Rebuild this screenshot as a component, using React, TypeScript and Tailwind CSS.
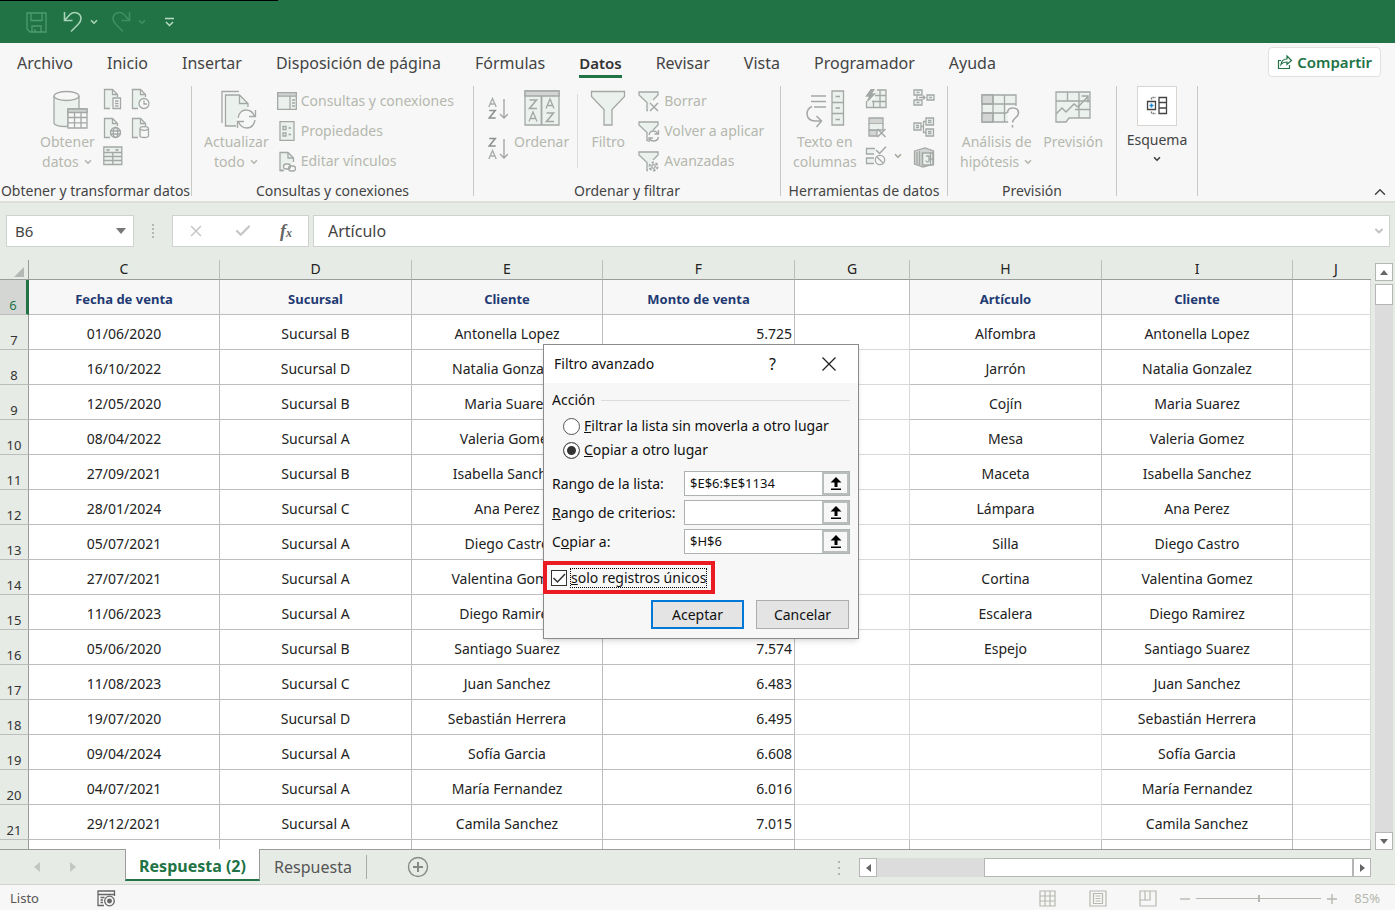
import type { ReactNode } from "react"
import { ChevronDown, ChevronUp, X, Check } from "lucide-react"

type Row = {
  n: number
  fecha: string
  sucursal: string
  cliente: string
  monto: string
  articulo: string
}

const rows: Row[] = [
  { n: 7, fecha: "01/06/2020", sucursal: "Sucursal B", cliente: "Antonella Lopez", monto: "5.725", articulo: "Alfombra" },
  { n: 8, fecha: "16/10/2022", sucursal: "Sucursal D", cliente: "Natalia Gonzalez", monto: "", articulo: "Jarrón" },
  { n: 9, fecha: "12/05/2020", sucursal: "Sucursal B", cliente: "Maria Suarez", monto: "", articulo: "Cojín" },
  { n: 10, fecha: "08/04/2022", sucursal: "Sucursal A", cliente: "Valeria Gomez", monto: "", articulo: "Mesa" },
  { n: 11, fecha: "27/09/2021", sucursal: "Sucursal B", cliente: "Isabella Sanchez", monto: "", articulo: "Maceta" },
  { n: 12, fecha: "28/01/2024", sucursal: "Sucursal C", cliente: "Ana Perez", monto: "", articulo: "Lámpara" },
  { n: 13, fecha: "05/07/2021", sucursal: "Sucursal A", cliente: "Diego Castro", monto: "", articulo: "Silla" },
  { n: 14, fecha: "27/07/2021", sucursal: "Sucursal A", cliente: "Valentina Gomez", monto: "", articulo: "Cortina" },
  { n: 15, fecha: "11/06/2023", sucursal: "Sucursal A", cliente: "Diego Ramirez", monto: "", articulo: "Escalera" },
  { n: 16, fecha: "05/06/2020", sucursal: "Sucursal B", cliente: "Santiago Suarez", monto: "7.574", articulo: "Espejo" },
  { n: 17, fecha: "11/08/2023", sucursal: "Sucursal C", cliente: "Juan Sanchez", monto: "6.483", articulo: "" },
  { n: 18, fecha: "19/07/2020", sucursal: "Sucursal D", cliente: "Sebastián Herrera", monto: "6.495", articulo: "" },
  { n: 19, fecha: "09/04/2024", sucursal: "Sucursal A", cliente: "Sofía Garcia", monto: "6.608", articulo: "" },
  { n: 20, fecha: "04/07/2021", sucursal: "Sucursal A", cliente: "María Fernandez", monto: "6.016", articulo: "" },
  { n: 21, fecha: "29/12/2021", sucursal: "Sucursal A", cliente: "Camila Sanchez", monto: "7.015", articulo: "" },
]

const menuTabs = [
  "Archivo",
  "Inicio",
  "Insertar",
  "Disposición de página",
  "Fórmulas",
  "Datos",
  "Revisar",
  "Vista",
  "Programador",
  "Ayuda",
]

const columns = ["C", "D", "E", "F", "G", "H", "I", "J"]

function Icon({ w, h, children }: { w: number; h: number; children: ReactNode }) {
  return (
    <svg width={w} height={h} viewBox={`0 0 ${w} ${h}`} fill="none" stroke="#a3a8a5" strokeWidth={1.3} className="shrink-0">
      {children}
    </svg>
  )
}

const pale = "#ebf2ee"

function DatabaseTableIcon() {
  return (
    <Icon w={44} h={40}>
      <g transform="translate(8 0)">
        <path d="M1 6v27c0 2 5 3.500 12 3.500h2V20h11V6" fill={pale} />
        <ellipse cx="13.500" cy="6" rx="12.500" ry="4.500" fill="#f7f7f7" />
        <path d="M15 19h19v19H15z" fill="#f7f7f7" />
        <path d="M15 19h19v3.500H15z" fill="#cfd3d1" />
        <path d="M15 27.500h19M15 32.800h19M21.500 22.500V38M28 22.500V38" />
      </g>
    </Icon>
  )
}

function PageIcon({ kind }: { kind: "text" | "clock" | "globe" | "db" }) {
  return (
    <Icon w={20} h={22}>
      <path d="M7 20.500H1.500v-19h8l5 5V9M9.500 1.500v5h5" fill={pale} />
      {kind === "text" && (
        <>
          <path d="M10 10h7.500v10.500H10z" fill="#f7f7f7" />
          <path d="M12 13h3.500M12 15.500h3.500M12 18h3.500" />
        </>
      )}
      {kind === "clock" && (
        <>
          <circle cx="13" cy="15.500" r="5" fill="#f7f7f7" />
          <path d="M13 12.500v3.500h3" />
        </>
      )}
      {kind === "globe" && (
        <>
          <circle cx="12.500" cy="15.500" r="5" fill="#f7f7f7" />
          <ellipse cx="12.500" cy="15.500" rx="2.200" ry="5" />
          <path d="M7.500 14h10M7.500 17h10" />
        </>
      )}
      {kind === "db" && (
        <>
          <path d="M9 11.500v7.500c0 2 8.500 2 8.500 0v-7.500" fill="#f7f7f7" />
          <ellipse cx="13.200" cy="11.500" rx="4.200" ry="1.800" fill="#f7f7f7" />
        </>
      )}
    </Icon>
  )
}

function TableIcon() {
  return (
    <Icon w={20} h={20}>
      <path d="M.8 1h18v17.500H.8z" fill={pale} />
      <path d="M.8 6.500h18M.8 10.500h18M.8 14.500h18M9.800 6.500v12" />
      <path d="M3.500 3.200 5 4.500l1.500-1.300M12.500 3.200 14 4.500l1.500-1.300" strokeWidth={1.500} />
    </Icon>
  )
}

function RefreshPageIcon() {
  return (
    <Icon w={44} h={40}>
      <g transform="translate(7 0)">
        <path d="M1 33V1.500h17" />
        <path d="M4.500 5h14l8.500 8.500V36H4.500z" fill={pale} stroke="none" />
        <path d="M15 36H4.500V5h14l8.500 8.500V17M18.500 5v8.500H27" />
        <circle cx="25.500" cy="29" r="10" fill="#f7f7f7" stroke="none" />
        <path d="M17 28c1-5 4-8 8-8 4 0 7 2.500 8.500 6M34.500 20v6.500H28M34 30c-1 5-4 8-8 8-4 0-7-2.500-8.500-6M16.500 38v-6.500H23" />
      </g>
    </Icon>
  )
}

function PaneIcon() {
  return (
    <Icon w={20} h={18}>
      <path d="M.7.700h18.600v16.600H.7z" fill={pale} />
      <path d="M.7.700h18.600v3.500H.7z" fill="#cfd3d1" />
      <path d="M13 4v13M15 8h3M15 11h3M15 14h3" />
    </Icon>
  )
}

function PropertiesIcon() {
  return (
    <Icon w={20} h={20}>
      <path d="M3 .7h14v18.600H3z" fill={pale} />
      <path d="M6 5.500h3v3H6zM6 12h3v3H6zM11.500 7H14M11.500 13.500H14" />
    </Icon>
  )
}

function EditLinksIcon() {
  return (
    <Icon w={20} h={21}>
      <path d="M7 19.500H3V1.500h8l5.500 5.500v4" fill={pale} />
      <path d="M11 1.500V7h5.500M3 19.500h3" />
      <rect x="6.500" y="13" width="7" height="5" rx="2.500" fill="#f7f7f7" />
      <rect x="11.500" y="15" width="7" height="5" rx="2.500" />
    </Icon>
  )
}

function SortIcon({ desc }: { desc?: boolean }) {
  return (
    <svg width={20} height={26} viewBox="0 0 20 26" fill="none" stroke="#a3a8a5" strokeWidth={1.4}>
      <g transform={desc ? "translate(0 12)" : undefined} stroke="#a9adab">
        <path d="M.8 10 4.500 1.500 8.200 10M2 7h5" />
      </g>
      <g transform={desc ? "translate(0 -12)" : undefined} stroke="#8d928f" strokeWidth={1.6}>
        <path d="M1.200 13.500h6L1.200 21h6.500" />
      </g>
      <path d="M16 2v19M12 17l4 4 4-4" />
    </svg>
  )
}

function SortDialogIcon() {
  return (
    <Icon w={36} h={36}>
      <path d="M1 1h34v34H1z" fill={pale} />
      <path d="M1 1h34v5H1z" fill="#d2d5d3" />
      <path d="M17.500 6v29" strokeWidth={1.800} />
      <path d="M5.500 10h7l-7 8.500h7.500M22.500 23h7l-7 8.500H30" strokeWidth={1.600} />
      <path d="m5 31.500 4-9.500 4 9.500M6.500 28.500h5M22 18.500 26 9l4 9.500M23.500 15.500h5" />
    </Icon>
  )
}

function FunnelIcon() {
  return (
    <Icon w={36} h={36}>
      <path d="M1.500 1.500h33v5L22 19.500V35h-8V19.500L1.500 6.500z" fill={pale} />
    </Icon>
  )
}

function SmallFunnelIcon({ kind }: { kind: "clear" | "reapply" | "advanced" }) {
  return (
    <Icon w={22} h={21}>
      <path d="M1 1h19v3.500L12 11v8l-3.500-2v-6L1 4.500z" fill={pale} stroke="none" />
      <path d="M10 19.500H9V11.500L1 4V1h19v3l-5 5" />
      {kind === "clear" && <path d="m12 12 8 8m0-8-8 8" strokeWidth={1.500} />}
      {kind === "reapply" && (
        <>
          <circle cx="15.500" cy="14.500" r="5.500" fill="#f7f7f7" stroke="none" />
          <path d="M11 14c.5-2.500 2-4 4.500-4 2 0 3.500 1 4.500 2.500M20.500 9v4h-4M20.500 16c-.5 2.500-2.500 4-5 4-2 0-3.500-1-4-2.500M11 21v-4h4" />
        </>
      )}
      {kind === "advanced" && (
        <>
          <circle cx="15.500" cy="15.500" r="4" fill="#f7f7f7" strokeWidth={2} strokeDasharray="2.500 1.600" />
          <circle cx="15.500" cy="15.500" r="1.800" />
        </>
      )}
    </Icon>
  )
}

function TextColumnsIcon() {
  return (
    <Icon w={40} h={40}>
      <path d="M6 6h15M6 11.500h15M9 17h12" />
      <path d="M7 16.500c-7 3-7 14 3 14.500h6M11.500 26l5 5-5 6" strokeWidth={1.500} />
      <path d="M27 1h11.500v34H27z" fill={pale} />
      <path d="M27 12.500h11.500M27 23.500h11.500M30.500 6.500h4.500M30.500 18h4.500M30.500 29.500h4.500" />
    </Icon>
  )
}

function FlashFillIcon() {
  return (
    <Icon w={22} h={20}>
      <path d="M9 1.500h12v17H1.500V10h9z" fill={pale} stroke="none" />
      <path d="M12 1h9v17.500H1.500V12M15 1v17.500M8.500 12v6.500M10 6.500h11M7 12.500h14" />
      <path d="M6 .5 1.500 7H5l-2.500 5L9.500 5H6L9 .5z" fill="#a3a8a5" />
    </Icon>
  )
}

function DuplicatesIcon() {
  return (
    <Icon w={22} h={21}>
      <path d="M4 1h14v6H4zM4 13h8v6H4z" fill="#d2d5d3" />
      <path d="M4 7v6h14V7" fill={pale} />
      <path d="m12.500 12 8 8m0-8-8 8" strokeWidth={1.500} />
    </Icon>
  )
}

function ValidationIcon() {
  return (
    <Icon w={22} h={20}>
      <path d="M10 2.500H1.500V8H9M9 12H1.500v5.500H9" fill={pale} />
      <path d="m11 4 3.500 3.500L21 .8" strokeWidth={1.500} />
      <circle cx="15" cy="14" r="4.700" />
      <path d="m11.800 10.800 6.500 6.500" />
    </Icon>
  )
}

function ConsolidateIcon() {
  return (
    <Icon w={22} h={18}>
      <path d="M1 1h8v5H1zM1 11h8v5H1zM14 6h7v5h-7z" fill={pale} />
      <path d="M3.500 3.500h3M3.500 13.500h3M16 8.500h3M4 6v5M6 8.500h6M10 6.500l2 2-2 2" />
    </Icon>
  )
}

function RelationsIcon() {
  return (
    <Icon w={22} h={20}>
      <path d="M1 6h7v7H1zM13 1h7.500v7H13zM13 12h7.500v7H13z" fill={pale} />
      <path d="M8 9.500h2.500M13 4.500h-2.500v11H13M3 8.500h3M3 10.500h3M15 3.500h3.500M15 5.500h3.500M15 14.500h3.500M15 16.500h3.500" />
    </Icon>
  )
}

function DataModelIcon() {
  return (
    <Icon w={22} h={21}>
      <path d="M1.500 4 12 1l8.500 3v13L10 20l-8.500-3z" fill="#d2d5d3" />
      <path d="M4 5v12M6.500 4v14" />
      <path d="M9.500 6h10.500v12H9.500z" fill={pale} strokeWidth={1.600} />
      <path d="M13 9h3v4.500c0 2-3 2-3 0M16 12h4M17.500 6v12" />
    </Icon>
  )
}

function WhatIfIcon() {
  return (
    <Icon w={48} h={40}>
      <g transform="translate(8 4)">
        <path d="M1 1h34v27H1z" fill={pale} />
        <path d="M1 1h11v9H1zM1 19h11v9H1z" fill="#d2d5d3" />
        <path d="M1 10h34M1 19h34M12 1v27M23.500 1v27" />
        <path d="M25 12h15v22H28z" fill="#f7f7f7" stroke="none" />
        <path d="M26.500 19c0-3 2-5 5.500-5s5.500 2 5.500 5c0 4.500-6 5-6 9.500M31.500 31v2.500" strokeWidth={1.600} />
      </g>
    </Icon>
  )
}

function ForecastIcon() {
  return (
    <Icon w={36} h={34}>
      <g transform="translate(0 1)">
        <path d="M1 1h34v26H14l-3 4H1z" fill={pale} />
        <path d="M1 10h34M20 18.500h15M12.500 1v9M24 1v26" />
        <path d="m1 23 6-6 4 4 8-8 4 3L33 5.500M26.500 5H33v6.500" strokeWidth={1.500} />
      </g>
    </Icon>
  )
}

function OutlineIcon() {
  return (
    <svg width={22} height={20} viewBox="0 0 22 20" fill="none" stroke="#444" strokeWidth={1.3}>
      <path d="M1.500 5.500h8v8h-8z" />
      <path d="M5.500 7.500v4M3.500 9.500h4" stroke="#1e8ad6" strokeWidth={1.600} />
      <path d="M5.500 3.500v-2H10M5.500 15.500v2H10" stroke="#777" strokeDasharray="2 1" />
      <path d="M13 1.500h7.500v16H13zM13 6.500h7.500M13 12h7.500" />
    </svg>
  )
}

function BigButton({ icon, lines, chevron, className }: { icon: ReactNode; lines: string[]; chevron?: boolean; className?: string }) {
  return (
    <button className={`flex shrink-0 flex-col items-center pt-1 text-sm leading-5 text-[#b5b8ae] ${className ?? ""}`}>
      <span className="flex h-[42px] items-start">{icon}</span>
      {lines.map((line, i) => (
        <span key={line} className="flex items-center gap-1 whitespace-nowrap">
          {line}
          {chevron && i === lines.length - 1 && <ChevronDown size={10} strokeWidth={4} />}
        </span>
      ))}
    </button>
  )
}

function SmallButton({ icon, label }: { icon: ReactNode; label: string }) {
  return (
    <button className="flex h-[30px] items-center gap-1 whitespace-nowrap text-sm text-[#b5b8ae]">
      {icon}
      {label}
    </button>
  )
}

function Group({ label, className, children }: { label: string; className: string; children: ReactNode }) {
  return (
    <>
      <section className={`flex shrink-0 flex-col ${className}`}>
        <div className="flex flex-1 items-start">{children}</div>
        <h2 className="h-5 whitespace-nowrap text-center text-sm leading-5 text-[#444]">{label}</h2>
      </section>
      <div className="h-[110px] w-px shrink-0 bg-[#c8c9c3]" />
    </>
  )
}

function TitleBar() {
  return (
    <header className="h-[43px] shrink-0 bg-[#217346]">
      <div className="h-px w-[278px] bg-black" />
      <div className="flex h-[42px] items-center pl-[26px]">
        <button aria-label="Guardar">
          <svg width="21" height="21" viewBox="0 0 21 21" fill="none" stroke="#4f9a70" strokeWidth="1.300">
            <path d="M1 1h19v19H4l-3-3zM5 1v7.500h11V1M6 20v-6h9v6M9 17v3" />
          </svg>
        </button>
        <button aria-label="Deshacer" className="ml-4 flex items-center gap-[6px] text-[#a9d3b9]">
          <svg width="20" height="22" viewBox="0 0 20 22" fill="none" stroke="currentColor" strokeWidth="1.600">
            <path d="M1.500 1v8.500h8M2 9l5-5.500c4-4 11-1.500 11 4 0 3-1.500 4.500-3 6L8 20.500" />
          </svg>
          <ChevronDown size={10} strokeWidth={4} />
        </button>
        <button aria-label="Rehacer" className="ml-3 flex items-center gap-[6px] text-[#3f8e61]">
          <svg width="20" height="22" viewBox="0 0 20 22" fill="none" stroke="currentColor" strokeWidth="1.600">
            <path d="M18.500 1v8.500h-8M18 9l-5-5.500c-4-4-11-1.500-11 4 0 3 1.500 4.500 3 6l7 7" />
          </svg>
          <ChevronDown size={10} strokeWidth={4} />
        </button>
        <button aria-label="Personalizar barra" className="ml-[17px] text-[#b9dcc6]">
          <svg width="11" height="10" viewBox="0 0 11 10" fill="none" stroke="currentColor" strokeWidth="1.500">
            <path d="M1 1.500h9M2 5l3.500 3.500L9 5" />
          </svg>
        </button>
      </div>
    </header>
  )
}

function MenuBar() {
  return (
    <nav className="flex h-[43px] shrink-0 items-start justify-between bg-[#f7f7f7] pl-[17px] pr-[14px] pt-1">
      <div className="flex gap-[34px]">
        {menuTabs.map((tab) => (
          <a
            key={tab}
            href="#"
            className={`whitespace-nowrap border-b-3 pt-1 leading-6 ${
              tab === "Datos" ? "border-[#217346] text-[15px] font-semibold text-[#333]" : "border-transparent text-base text-[#444]"
            }`}
          >
            {tab}
          </a>
        ))}
      </div>
      <button className="flex h-[30px] items-center gap-1 rounded-sm border border-[#e3e0de] bg-white px-2 text-[15px] font-semibold text-[#217346]">
        <svg width="16" height="15" viewBox="0 0 16 15" fill="none" stroke="currentColor" strokeWidth="1.200">
          <path d="M4 5.500H1.500v8h11V10M4 9.500c.5-4 3-5.500 6-5.500V1l4.500 4.500L10 9.500V7C7.500 7 5.500 7.500 4 9.500z" />
        </svg>
        Compartir
      </button>
    </nav>
  )
}

function Ribbon() {
  return (
    <div className="flex h-[117px] shrink-0 items-start border-b-2 border-[#dcdfda] bg-[#f7f7f7]">
      <Group label="Obtener y transformar datos" className="h-[115px] w-[191px]">
        <BigButton icon={<DatabaseTableIcon />} lines={["Obtener", "datos"]} chevron className="ml-10" />
        <div className="ml-2 grid grid-cols-2 gap-x-2 gap-y-[7px] pt-[2px]">
          <button aria-label="De texto/CSV"><PageIcon kind="text" /></button>
          <button aria-label="Fuentes recientes"><PageIcon kind="clock" /></button>
          <button aria-label="De la web"><PageIcon kind="globe" /></button>
          <button aria-label="Conexiones existentes"><PageIcon kind="db" /></button>
          <button aria-label="De tabla o rango"><TableIcon /></button>
        </div>
      </Group>

      <Group label="Consultas y conexiones" className="h-[115px] w-[281px]">
        <BigButton icon={<RefreshPageIcon />} lines={["Actualizar", "todo"]} chevron className="ml-3" />
        <div className="ml-2 flex flex-col">
          <SmallButton icon={<PaneIcon />} label="Consultas y conexiones" />
          <SmallButton icon={<PropertiesIcon />} label="Propiedades" />
          <SmallButton icon={<EditLinksIcon />} label="Editar vínculos" />
        </div>
      </Group>

      <Group label="Ordenar y filtrar" className="h-[115px] w-[306px]">
        <div className="ml-[14px] flex flex-col gap-[14px] pt-[11px]">
          <button aria-label="Ordenar de A a Z"><SortIcon /></button>
          <button aria-label="Ordenar de Z a A"><SortIcon desc /></button>
        </div>
        <BigButton icon={<SortDialogIcon />} lines={["Ordenar"]} className="ml-[6px]" />
        <div className="ml-2 mt-2 h-[74px] w-px bg-[#dcddd7]" />
        <BigButton icon={<FunnelIcon />} lines={["Filtro"]} className="ml-3" />
        <div className="ml-3 flex flex-col">
          <SmallButton icon={<SmallFunnelIcon kind="clear" />} label="Borrar" />
          <SmallButton icon={<SmallFunnelIcon kind="reapply" />} label="Volver a aplicar" />
          <SmallButton icon={<SmallFunnelIcon kind="advanced" />} label="Avanzadas" />
        </div>
      </Group>

      <Group label="Herramientas de datos" className="h-[115px] w-[166px]">
        <BigButton icon={<TextColumnsIcon />} lines={["Texto en", "columnas"]} className="ml-3" />
        <div className="ml-2 flex flex-col gap-2 pt-[3px]">
          <button aria-label="Relleno rápido"><FlashFillIcon /></button>
          <button aria-label="Quitar duplicados"><DuplicatesIcon /></button>
          <button aria-label="Validación de datos" className="flex items-center gap-[6px] text-[#a5a8a0]">
            <ValidationIcon />
            <ChevronDown size={10} strokeWidth={4} />
          </button>
        </div>
        <div className="ml-[10px] flex flex-col gap-[10px] pt-[3px]">
          <button aria-label="Consolidar"><ConsolidateIcon /></button>
          <button aria-label="Relaciones"><RelationsIcon /></button>
          <button aria-label="Modelo de datos"><DataModelIcon /></button>
        </div>
      </Group>

      <Group label="Previsión" className="h-[115px] w-[168px]">
        <BigButton icon={<WhatIfIcon />} lines={["Análisis de", "hipótesis"]} chevron className="ml-3" />
        <BigButton icon={<ForecastIcon />} lines={["Previsión"]} className="ml-[10px]" />
      </Group>

      <section className="flex h-[115px] w-[80px] shrink-0 flex-col items-center">
        <button className="flex flex-col items-center text-sm leading-5 text-[#444]">
          <span className="mb-1 flex h-10 w-10 items-center justify-center border border-[#d9d4d0] bg-white">
            <OutlineIcon />
          </span>
          Esquema
          <ChevronDown size={10} strokeWidth={4} className="mt-1" />
        </button>
      </section>
      <div className="h-[110px] w-px shrink-0 bg-[#c8c9c3]" />
      <button aria-label="Contraer la cinta" className="ml-auto mr-[6px] self-end text-[#444]">
        <ChevronUp size={18} />
      </button>
    </div>
  )
}

function FormulaBar() {
  return (
    <div className="flex shrink-0 items-center bg-[#e6ebe6] pb-[13px] pl-[6px] pr-[5px] pt-3 text-[15px] text-[#444]">
      <div className="flex h-8 w-32 items-center border border-[#cfd3cf] bg-white">
        <input aria-label="Cuadro de nombres" defaultValue="B6" className="w-full min-w-0 bg-transparent pl-2 outline-none" />
        <button aria-label="Abrir nombres" className="px-[7px]">
          <svg width="10" height="6" viewBox="0 0 10 6" fill="#777"><path d="M0 0h10L5 6z" /></svg>
        </button>
      </div>
      <svg width="4" height="14" viewBox="0 0 4 14" fill="#b5b5b5" className="mx-[17px]">
        <path d="M1 0h2v2H1zM1 4h2v2H1zM1 8h2v2H1zM1 12h2v2H1z" />
      </svg>
      <div className="flex h-8 w-[137px] items-center justify-between border border-[#cfd3cf] bg-white px-[14px]">
        <button aria-label="Cancelar entrada" className="text-[#c6c6c6]"><X size={18} /></button>
        <button aria-label="Introducir" className="text-[#c6c6c6]"><Check size={18} strokeWidth={3} /></button>
        <button aria-label="Insertar función" className="pr-[2px] font-['Liberation_Serif',serif] text-lg font-bold italic leading-5 text-[#666]">
          f<span className="text-xs">x</span>
        </button>
      </div>
      <div className="ml-1 flex h-8 flex-1 items-center border border-[#cfd3cf] bg-white">
        <input aria-label="Barra de fórmulas" defaultValue="Artículo" className="w-full min-w-0 bg-transparent pl-[14px] text-base outline-none" />
        <button aria-label="Expandir barra de fórmulas" className="px-1 text-[#c3c3c3]"><ChevronDown size={12} strokeWidth={4} /></button>
      </div>
    </div>
  )
}

function Cell({ children, soft, right }: { children?: ReactNode; soft?: boolean; right?: boolean }) {
  return (
    <td
      className={`h-[35px] overflow-hidden whitespace-nowrap border-b border-r pb-0 pt-[3px] leading-5 ${soft ? "border-[#d8dad8]" : "border-[#bdbdbd]"} ${
        right ? "pl-0 pr-[2px] text-right" : "px-0 text-center"
      }`}
    >
      {children}
    </td>
  )
}

function HeadCell({ children }: { children?: ReactNode }) {
  return (
    <td className={`h-[35px] border-b border-r border-[#bdbdbd] px-0 pb-0 pt-[3px] text-center text-[13px] font-bold leading-5 text-[#1f3a73] ${children ? "bg-[#f7f7f7]" : ""}`}>
      {children}
    </td>
  )
}

function RowHead({ n, active }: { n: number; active?: boolean }) {
  return (
    <th
      scope="row"
      className={`border-b p-0 align-bottom text-[13px] font-normal leading-[18px] ${
        active ? "border-b-[#bdbdbd] border-r-3 border-r-[#217346] bg-[#d4d6d4] text-[#217346]" : "border-r border-b-[#bdbdbd] border-r-[#9b9b9b] bg-[#e6ebe6] text-[#333]"
      }`}
    >
      {n}
    </th>
  )
}

function Sheet() {
  return (
    <main className="flex min-h-0 flex-1 overflow-hidden bg-[#e6ebe6]">
      <div className="min-w-0 flex-1 overflow-hidden border-b border-[#9b9b9b]">
        <table className="w-full table-fixed border-separate border-spacing-0 bg-white text-sm text-[#222]">
          <colgroup>
            <col className="w-[29px]" />
            <col className="w-[191px]" />
            <col className="w-[192px]" />
            <col className="w-[191px]" />
            <col className="w-[192px]" />
            <col className="w-[115px]" />
            <col className="w-[192px]" />
            <col className="w-[191px]" />
            <col />
          </colgroup>
          <thead>
            <tr className="bg-[#e6ebe6]">
              <td className="h-5 border-b border-r border-[#9b9b9b] p-0">
                <svg width="10" height="10" viewBox="0 0 10 10" fill="#b5b9b5" className="ml-auto mr-1 mt-1"><path d="M10 0v10H0z" /></svg>
              </td>
              {columns.map((c) => (
                <th
                  key={c}
                  scope="col"
                  className={`h-5 border-b border-b-[#9b9b9b] pb-[2px] pr-0 pt-0 text-sm font-normal leading-4 ${
                    c === "J" ? "pl-2" : "border-r border-r-[#bdbdbd] pl-0"
                  }`}
                >
                  {c}
                </th>
              ))}
            </tr>
          </thead>
          <tbody>
            <tr>
              <RowHead n={6} active />
              <HeadCell>Fecha de venta</HeadCell>
              <HeadCell>Sucursal</HeadCell>
              <HeadCell>Cliente</HeadCell>
              <HeadCell>Monto de venta</HeadCell>
              <HeadCell />
              <HeadCell>Artículo</HeadCell>
              <HeadCell>Cliente</HeadCell>
              <Cell soft />
            </tr>
            {rows.map((r) => (
              <tr key={r.n}>
                <RowHead n={r.n} />
                <Cell>{r.fecha}</Cell>
                <Cell>{r.sucursal}</Cell>
                <Cell>{r.cliente}</Cell>
                <Cell right>{r.monto}</Cell>
                <Cell soft />
                <Cell soft={!r.articulo}>{r.articulo}</Cell>
                <Cell>{r.cliente}</Cell>
                <Cell soft />
              </tr>
            ))}
            <tr>
              <th className="h-[35px] border-r border-[#9b9b9b] bg-[#e6ebe6]" />
              {columns.map((c) => (
                <Cell key={c} />
              ))}
            </tr>
          </tbody>
        </table>
      </div>
      <div className="ml-1 mr-[2px] mt-[3px] flex w-[18px] flex-col">
        <button aria-label="Subir" className="flex h-[18px] shrink-0 items-center justify-center border border-[#b5b5b5] bg-white">
          <svg width="8" height="5" viewBox="0 0 8 5" fill="#666"><path d="M0 5h8L4 0z" /></svg>
        </button>
        <div className="mt-[3px] h-[21px] shrink-0 border border-[#b5b5b5] bg-white" />
        <div className="flex-1 bg-[#dcdcdc]" />
        <button aria-label="Bajar" className="flex h-[18px] shrink-0 items-center justify-center border border-[#b5b5b5] bg-white">
          <svg width="8" height="5" viewBox="0 0 8 5" fill="#666"><path d="M0 0h8L4 5z" /></svg>
        </button>
      </div>
    </main>
  )
}

function SheetTabs() {
  return (
    <div className="flex h-[34px] shrink-0 items-start bg-[#e6ebe6] text-base text-[#555]">
      <div className="flex h-[34px] w-[125px] items-center gap-[30px] pl-[34px]">
        <button aria-label="Hoja anterior"><svg width="6" height="10" viewBox="0 0 6 10" fill="#c3c6c3"><path d="M6 0v10L0 5z" /></svg></button>
        <button aria-label="Hoja siguiente"><svg width="6" height="10" viewBox="0 0 6 10" fill="#c3c6c3"><path d="M0 0v10l6-5z" /></svg></button>
      </div>
      <button className="-mt-px h-8 w-[135px] whitespace-nowrap border-x border-b-2 border-x-[#9b9b9b] border-b-[#217346] bg-white pt-1 font-bold text-[#217346]">Respuesta (2)</button>
      <button className="mt-[5px] h-6 w-[107px] border-r border-[#aaa]">Respuesta</button>
      <button aria-label="Hoja nueva" className="ml-10 mt-[6px]">
        <svg width="22" height="22" viewBox="0 0 22 22" fill="none" stroke="#858a86" strokeWidth="1.400">
          <circle cx="11" cy="11" r="9.500" />
          <path d="M6 11h10M11 6v10" strokeWidth="2" />
        </svg>
      </button>
      <div className="ml-auto mr-6 mt-2 flex h-[19px] w-[534px] items-center">
        <svg width="4" height="14" viewBox="0 0 4 14" fill="#b5b5b5" className="mr-[18px]">
          <path d="M1 0h2v2H1zM1 6h2v2H1zM1 12h2v2H1z" />
        </svg>
        <button aria-label="Desplazar a la izquierda" className="flex h-full w-[18px] items-center justify-center border border-[#b5b5b5] bg-white">
          <svg width="5" height="8" viewBox="0 0 5 8" fill="#666"><path d="M5 0v8L0 4z" /></svg>
        </button>
        <div className="h-full w-[107px] bg-[#dcdcdc]" />
        <div className="h-full flex-1 border border-[#b5b5b5] bg-white" />
        <button aria-label="Desplazar a la derecha" className="flex h-full w-[18px] items-center justify-center border border-[#b5b5b5] bg-white">
          <svg width="5" height="8" viewBox="0 0 5 8" fill="#666"><path d="M0 0v8l5-4z" /></svg>
        </button>
      </div>
    </div>
  )
}

function StatusBar() {
  return (
    <footer className="flex h-[26px] shrink-0 items-center border-t border-[#d2d4ce] bg-[#f7f7f7] pl-[10px] pr-[15px] pt-[2px] text-[13px] text-[#555]">
      <span className="w-[87px]">Listo</span>
      <button aria-label="Grabar macro">
        <svg width="19" height="17" viewBox="0 0 19 17" fill="none" stroke="#666" strokeWidth="1.300">
          <path d="M7 15.500H1V1h16.500v5M1 4.500h16.500M3.500 7.500h4M3.500 10h2.500M3.500 12.500h2.500" />
          <circle cx="12.500" cy="11" r="4.800" />
          <circle cx="12.500" cy="11" r="1.800" fill="#666" />
        </svg>
      </button>
      <div className="ml-auto flex items-center text-[#b5b8ae]">
        <button aria-label="Normal" className="mr-[33px]">
          <svg width="17" height="17" viewBox="0 0 17 17" fill="none" stroke="currentColor" strokeWidth="1.200"><path d="M1 1h15v15H1zM1 6h15M1 11h15M6 1v15M11 1v15" /></svg>
        </button>
        <button aria-label="Diseño de página" className="mr-8">
          <svg width="18" height="17" viewBox="0 0 18 17" fill="none" stroke="currentColor" strokeWidth="1.200"><path d="M1 1h16v15H1zM4.500 3.500h9v10h-9zM6.500 6h5M6.500 8.500h5M6.500 11h5" /></svg>
        </button>
        <button aria-label="Vista previa de salto de página" className="mr-[23px]">
          <svg width="18" height="17" viewBox="0 0 18 17" fill="none" stroke="currentColor" strokeWidth="1.200"><path d="M1 1h16v15H1zM1 10h10V1M6 1v9" /></svg>
        </button>
        <button aria-label="Alejar" className="mr-[6px]">
          <svg width="10" height="10" viewBox="0 0 10 10" stroke="currentColor" strokeWidth="1.400"><path d="M0 5h10" /></svg>
        </button>
        <input
          type="range"
          aria-label="Zoom"
          defaultValue={50}
          className="h-px w-[125px] appearance-none bg-[#b5b8ae] [&::-webkit-slider-thumb]:h-[7px] [&::-webkit-slider-thumb]:w-[2px] [&::-webkit-slider-thumb]:appearance-none [&::-webkit-slider-thumb]:bg-[#b5b8ae]"
        />
        <button aria-label="Acercar" className="ml-[6px] mr-[17px]">
          <svg width="10" height="10" viewBox="0 0 10 10" stroke="currentColor" strokeWidth="1.400"><path d="M0 5h10M5 0v10" /></svg>
        </button>
        <span>85%</span>
      </div>
    </footer>
  )
}

function RangeField({ id, label, value }: { id: string; label: ReactNode; value: string }) {
  return (
    <div className="flex h-[25px] items-center">
      <label htmlFor={id} className="flex-1 whitespace-nowrap">{label}</label>
      <div className="flex h-full w-[166px] border border-[#adb2b5] bg-white">
        <input id={id} defaultValue={value} className="w-full min-w-0 bg-transparent pl-[5px] text-[13px] outline-none" />
        <button aria-label="Seleccionar rango" className="flex w-[27px] shrink-0 items-center justify-center border-2 border-[#b9bebc] bg-[#f7f7f7]">
          <svg width="12" height="14" viewBox="0 0 12 14" fill="#000"><path d="M6 0l5.500 5.500h-4V10h-3V5.500h-4zM1 11.500h10V13H1z" /></svg>
        </button>
      </div>
    </div>
  )
}

function RadioOption({ id, children, checked }: { id: string; children: ReactNode; checked?: boolean }) {
  return (
    <label htmlFor={id} className="flex h-6 items-center gap-1 whitespace-nowrap">
      <input
        id={id}
        type="radio"
        name="accion"
        defaultChecked={checked}
        className="h-[17px] w-[17px] shrink-0 appearance-none rounded-full border border-[#555] bg-white checked:bg-[#333] checked:shadow-[inset_0_0_0_3px_white]"
      />
      <span>{children}</span>
    </label>
  )
}

function AdvancedFilterDialog() {
  return (
    <div role="dialog" aria-label="Filtro avanzado" className="absolute left-[543px] top-[344px] w-[316px] border border-[#8b8b8b] bg-[#f7f7f7] text-sm text-[#111] shadow-md">
      <div className="flex h-[38px] items-center bg-white pl-[10px] pr-[22px]">
        <span className="flex-1">Filtro avanzado</span>
        <button aria-label="Ayuda" className="mr-[46px] text-base">?</button>
        <button aria-label="Cerrar">
          <svg width="14" height="14" viewBox="0 0 14 14" stroke="#222" strokeWidth="1.300"><path d="m.5.5 13 13M13.500.5l-13 13" /></svg>
        </button>
      </div>
      <div className="px-2 pt-[7px]">
        <div className="flex items-center gap-[6px] leading-5">
          Acción
          <div className="h-px flex-1 bg-[#dcdcdc]" />
        </div>
        <div className="mb-[9px] mt-1 pl-[11px]">
          <RadioOption id="filtrar"><u>F</u>iltrar la lista sin moverla a otro lugar</RadioOption>
          <RadioOption id="copiar" checked><u>C</u>opiar a otro lugar</RadioOption>
        </div>
        <div className="flex flex-col gap-1">
          <RangeField id="lista" label={<>Ran<u>g</u>o de la lista:</>} value="$E$6:$E$1134" />
          <RangeField id="criterios" label={<><u>R</u>ango de criterios:</>} value="" />
          <RangeField id="destino" label={<>C<u>o</u>piar a:</>} value="$H$6" />
        </div>
      </div>
      <div className="-ml-px mt-[7px] flex h-[33px] w-[172px] items-center border-4 border-[#ea1b23] pl-1">
        <input id="unicos" type="checkbox" defaultChecked className="peer h-4 w-4 shrink-0 appearance-none border border-[#333] bg-white" />
        <svg width="16" height="16" viewBox="0 0 16 16" fill="none" stroke="#333" strokeWidth="1.500" className="pointer-events-none invisible -ml-4 shrink-0 peer-checked:visible">
          <path d="m2.500 8 4 4L14 4" />
        </svg>
        <label htmlFor="unicos" className="ml-[3px] whitespace-nowrap border border-dotted border-black leading-[18px]">
          <u>s</u>olo registros únicos
        </label>
      </div>
      <div className="mb-[9px] mr-[9px] mt-[6px] flex justify-end gap-3">
        <button className="h-[29px] w-[93px] border-2 border-[#0078d7] bg-[#e3e4e3]">Aceptar</button>
        <button className="h-[29px] w-[93px] border border-[#adadad] bg-[#e3e4e3]">Cancelar</button>
      </div>
    </div>
  )
}

export default function App() {
  return (
    <div className="relative flex h-screen flex-col overflow-hidden bg-[#e6ebe6] font-['Noto_Sans',sans-serif]">
      <TitleBar />
      <MenuBar />
      <Ribbon />
      <FormulaBar />
      <Sheet />
      <SheetTabs />
      <StatusBar />
      <AdvancedFilterDialog />
    </div>
  )
}
